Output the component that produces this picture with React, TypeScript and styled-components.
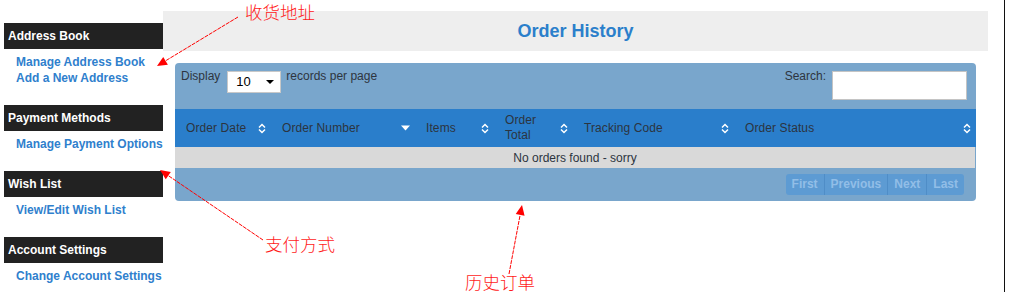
import React from "react";
import styled, { createGlobalStyle } from "styled-components";

const Global = createGlobalStyle`
  html, body { margin: 0; padding: 0; background: #fff; }
  body { font-family: "Liberation Sans", Arial, sans-serif; font-size: 12px; color: #333; overflow: hidden; }
  * { box-sizing: border-box; }
`;

const Page = styled.div`
  position: relative;
  width: 1012px;
  height: 292px;
  display: flex;
  align-items: flex-start;
  overflow: hidden;
`;

const Sidebar = styled.nav`
  width: 159px;
  margin-left: 4px;
  margin-top: -12px;
  display: flex;
  flex-direction: column;
`;

const Section = styled.div`
  display: flex;
  flex-direction: column;
  margin-bottom: 19px;
`;

const SectionHeader = styled.div`
  height: 26px;
  background: #222;
  color: #fff;
  font-weight: bold;
  font-size: 12px;
  line-height: 26px;
  padding-left: 4px;
  margin-bottom: 5px;
`;

const NavLink = styled.a`
  display: block;
  color: #2f80cd;
  font-weight: bold;
  font-size: 12px;
  line-height: 16px;
  padding-left: 12px;
  text-decoration: none;
  white-space: nowrap;
`;

const Main = styled.main`
  width: 825px;
  padding-top: 11px;
  display: flex;
  flex-direction: column;
`;

const EdgeLine = styled.div`
  width: 1px;
  height: 292px;
  margin-left: 16px;
  background: #111;
  flex-shrink: 0;
`;

const TitleBar = styled.div`
  height: 40px;
  background: #eeeeee;
  display: flex;
  align-items: center;
  justify-content: center;
`;

const Title = styled.h1`
  margin: 0;
  font-size: 18px;
  font-weight: bold;
  color: #2b7fcb;
`;

const TableWrap = styled.div`
  margin: 12px 12px 0 12px;
  background: #79a6cc;
  border-radius: 4px;
  overflow: hidden;
`;

const Toolbar = styled.div`
  height: 46px;
  padding: 6px 9px 0 6px;
  display: flex;
  justify-content: space-between;
  align-items: flex-start;
  color: #2e3540;
  font-size: 12px;
  line-height: 14px;
`;

const Group = styled.div`
  display: flex;
  align-items: flex-start;
`;

const FakeSelect = styled.div`
  width: 54px;
  height: 22px;
  margin: 2px 5px 0 7px;
  background: #fff;
  border: 1px solid #c8c8c8;
  display: flex;
  align-items: center;
  justify-content: space-between;
  padding: 0 6px 0 8px;
  color: #000;
  font-size: 13px;
`;

const Caret = styled.span`
  width: 0;
  height: 0;
  border-left: 4px solid transparent;
  border-right: 4px solid transparent;
  border-top: 4px solid #000;
`;

const SearchInput = styled.div`
  width: 135px;
  height: 29px;
  margin: 2px 0 0 6px;
  background: #fff;
  border: 1px solid #c4c4c4;
`;

const HeadRow = styled.div`
  display: grid;
  grid-template-columns: 96px 144px 79px 79px 161px 1fr;
  height: 38px;
  background: #2a7ecb;
`;

const Th = styled.div`
  display: flex;
  align-items: center;
  justify-content: space-between;
  padding: 0 5px 0 11px;
  color: #2c3440;
  font-size: 12px;
  line-height: 15px;
  letter-spacing: 0.1px;
`;

const EmptyRow = styled.div`
  height: 21px;
  background: #d9d9d9;
  margin-right: 1px;
  display: flex;
  align-items: center;
  justify-content: center;
  color: #2c3440;
  font-size: 12px;
`;

const Footer = styled.div`
  height: 33px;
  display: flex;
  justify-content: flex-end;
  align-items: flex-start;
  padding: 6px 12px 0 0;
`;

const Pager = styled.div`
  display: flex;
  background: #5d9bd3;
  border-radius: 3px;
  overflow: hidden;
`;

const PageBtn = styled.span<{ $first?: boolean }>`
  height: 21px;
  line-height: 21px;
  padding: 0 6px;
  font-weight: bold;
  font-size: 12px;
  color: #92bee7;
  border-left: ${(p) => (p.$first ? "none" : "1px solid #4f8dc7")};
`;

const Overlay = styled.div`
  position: absolute;
  inset: 0;
  pointer-events: none;
`;

const Note = styled.span<{ $x: number; $y: number }>`
  position: absolute;
  left: ${(p) => p.$x}px;
  top: ${(p) => p.$y}px;
  color: #ff1a1a;
  font-family: "Noto Sans CJK SC", "Noto Sans", sans-serif;
  font-size: 17.5px;
  line-height: 18px;
  font-weight: 300;
  white-space: nowrap;
`;

const ArrowSvg = styled.svg`
  position: absolute;
  left: 0;
  top: 0;
`;

const SortIcon = () => (
  <svg width="8" height="11" viewBox="0 0 8 11">
    <polyline points="1,4.5 4,1.5 7,4.5" fill="none" stroke="#fff" strokeWidth="1.5" />
    <polyline points="1,6.5 4,9.5 7,6.5" fill="none" stroke="#fff" strokeWidth="1.5" />
  </svg>
);

const DescIcon = () => (
  <svg width="9" height="6" viewBox="0 0 9 6">
    <polygon points="0,0.5 9,0.5 4.5,5.5" fill="#fff" />
  </svg>
);

const columns: { label: React.ReactNode; desc?: boolean }[] = [
  { label: "Order Date" },
  { label: "Order Number", desc: true },
  { label: "Items" },
  { label: (<>Order<br />Total</>) },
  { label: "Tracking Code" },
  { label: "Order Status" },
];

const sections = [
  { title: "Address Book", links: ["Manage Address Book", "Add a New Address"] },
  { title: "Payment Methods", links: ["Manage Payment Options"] },
  { title: "Wish List", links: ["View/Edit Wish List"] },
  { title: "Account Settings", links: ["Change Account Settings"] },
];

function Arrow({ x1, y1, x2, y2 }: { x1: number; y1: number; x2: number; y2: number }) {
  const dx = x2 - x1;
  const dy = y2 - y1;
  const len = Math.hypot(dx, dy);
  const ux = dx / len;
  const uy = dy / len;
  const hl = 10;
  const hw = 4.5;
  const bx = x2 - ux * hl;
  const by = y2 - uy * hl;
  const p1 = `${bx - uy * hw},${by + ux * hw}`;
  const p2 = `${bx + uy * hw},${by - ux * hw}`;
  return (
    <g>
      <line x1={x1} y1={y1} x2={bx} y2={by} stroke="#ff0000" strokeWidth="1" strokeDasharray="4 1" />
      <polygon points={`${x2},${y2} ${p1} ${p2}`} fill="#ff0000" />
    </g>
  );
}

export default function App() {
  return (
    <>
      <Global />
      <Page>
        <Sidebar>
          <Section>
            <NavLink href="#">View Returns</NavLink>
          </Section>
          {sections.map((s) => (
            <Section key={s.title}>
              <SectionHeader>{s.title}</SectionHeader>
              {s.links.map((l) => (
                <NavLink key={l} href="#">{l}</NavLink>
              ))}
            </Section>
          ))}
        </Sidebar>
        <Main>
          <TitleBar>
            <Title>Order History</Title>
          </TitleBar>
          <TableWrap>
            <Toolbar>
              <Group>
                <span>Display</span>
                <FakeSelect>
                  <span>10</span>
                  <Caret />
                </FakeSelect>
                <span>records per page</span>
              </Group>
              <Group>
                <span>Search:</span>
                <SearchInput />
              </Group>
            </Toolbar>
            <HeadRow>
              {columns.map((c, i) => (
                <Th key={i}>
                  <span>{c.label}</span>
                  {c.desc ? <DescIcon /> : <SortIcon />}
                </Th>
              ))}
            </HeadRow>
            <EmptyRow>No orders found - sorry</EmptyRow>
            <Footer>
              <Pager>
                <PageBtn $first>First</PageBtn>
                <PageBtn>Previous</PageBtn>
                <PageBtn>Next</PageBtn>
                <PageBtn>Last</PageBtn>
              </Pager>
            </Footer>
          </TableWrap>
        </Main>
        <EdgeLine />
        <Overlay>
          <ArrowSvg width="1012" height="292" viewBox="0 0 1012 292">
            <Arrow x1={238} y1={17} x2={157} y2={66} />
            <Arrow x1={263} y1={240} x2={160} y2={170} />
            <Arrow x1={509} y1={274} x2={522} y2={205} />
          </ArrowSvg>
          <Note $x={245} $y={3}>收货地址</Note>
          <Note $x={265} $y={235}>支付方式</Note>
          <Note $x={465} $y={273}>历史订单</Note>
        </Overlay>
      </Page>
    </>
  );
}
